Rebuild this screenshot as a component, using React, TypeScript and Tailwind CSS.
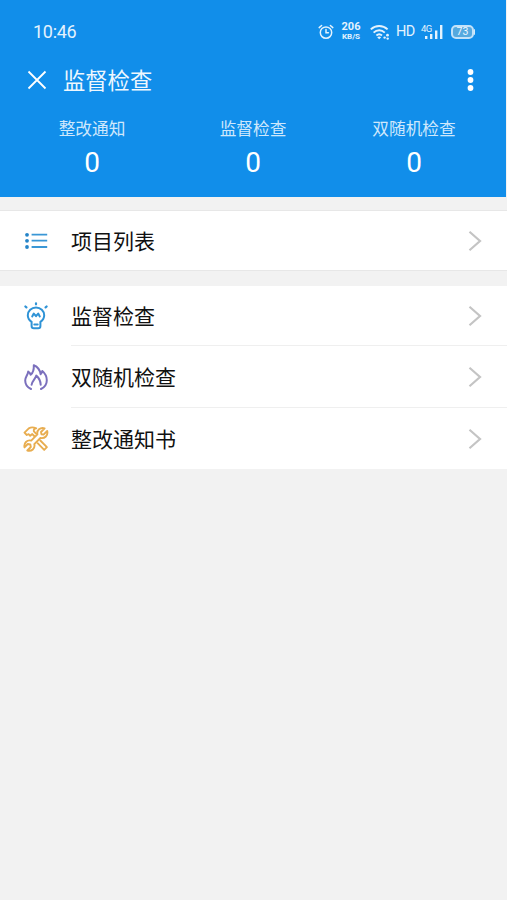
import React from 'react';

interface StatProps {
  label: string;
  value: number;
}

interface MenuRowProps {
  icon: React.ReactNode;
  title: string;
  divider?: boolean;
  className: string;
}

const stats: StatProps[] = [
  { label: '整改通知', value: 0 },
  { label: '监督检查', value: 0 },
  { label: '双随机检查', value: 0 },
];

const AlarmIcon = () => (
  <svg width="16" height="16" viewBox="0 0 16 16" fill="none" stroke="currentColor" strokeWidth="1.5" strokeLinecap="round">
    <circle cx="8" cy="8.6" r="5.7" />
    <path d="M8 5.6v3.2h2.4M1.2 3.6 3.6 1.5M14.8 3.6l-2.4-2.1" />
  </svg>
);

const WifiIcon = () => (
  <svg width="20" height="16" viewBox="0 0 20 16" fill="none" stroke="currentColor" strokeWidth="1.9">
    <path d="M.8 5.4c4.800-4.600 12-4.600 16.800 0M3.600 8.600c3.200-3.100 8-3.100 11.200 0M6.400 11.500c1.700-1.500 3.900-1.500 5.600 0" />
    <path d="m7.200 13.200 2 2.100 2-2.100c-1.200-.9-2.800-.9-4 0z" fill="currentColor" stroke="none" />
    <g fill="currentColor" stroke="none">
      <circle cx="14.600" cy="13.600" r="1.200" />
      <circle cx="17.500" cy="11.200" r="1.400" />
      <circle cx="17.700" cy="14.600" r="1.200" />
    </g>
  </svg>
);

const SignalIcon = () => (
  <svg width="22" height="16" viewBox="0 0 22 16" fill="currentColor">
    <rect x="3" y="12" width="2.4" height="3" />
    <rect x="8" y="10" width="2.4" height="5" />
    <rect x="13" y="6.5" width="2.4" height="8.5" />
    <rect x="18" y="1" width="2.4" height="14" />
  </svg>
);

const ListIcon = () => (
  <svg width="24" height="18" viewBox="0 0 24 18" fill="none" stroke="#3a97d6" strokeWidth="1.8">
    <path d="M7.6 2.6h15.6M7.6 8.7h15.6M7.6 15h15.6" />
    <g fill="#2484c8" stroke="none">
      <circle cx="3" cy="2.8" r="1.9" />
      <circle cx="3" cy="8.8" r="1.9" />
      <circle cx="3" cy="15" r="1.9" />
    </g>
  </svg>
);

const BulbIcon = () => (
  <svg width="24" height="28" viewBox="0 0 24 28" fill="none" stroke="#2f93d6" strokeWidth="2" strokeLinecap="round" strokeLinejoin="round">
    <path d="M7.6 19.8C5.2 18.2 3.800 15.900 3.800 13.200 3.800 8.800 7.400 5.400 12 5.400s8.200 3.400 8.200 7.800c0 2.700-1.400 5-3.800 6.600v4.200c0 1.400-.8 2.200-2.200 2.200H9.800c-1.400 0-2.200-.8-2.200-2.200z" />
    <path d="m8.200 14.400 1.600-2.800 2.200 2.600 2.200-2.600 1.600 2.800M10.300 22.600h3.400" />
    <path d="M12 1.300v1M1.400 4.500l1 .9M22.600 4.500l-1 .9" strokeWidth="2.2" />
  </svg>
);

const FlameIcon = () => (
  <svg width="24" height="28" viewBox="0 0 24 28" fill="none" stroke="#7b70bd" strokeWidth="2" strokeLinecap="round" strokeLinejoin="round">
    <path d="M7 26C3.500 24.300 1.200 21.200 1.200 17.400c0-3.400 2.600-5.400 3-8.800 1.300.7 2 1.700 2.400 3.200C9.500 9.400 10 6 9.800 2.200c4.200 1.700 6.200 4.800 6.800 9 1-.8 1.500-1.800 1.700-3.200 2.800 2.400 4.500 5.600 4.500 9.200 0 3.900-2.200 7-5.800 8.800" />
    <path d="M7.600 21.800c.3-4 3.600-5.300 4.700-9.200 2.700 2.200 4.200 5.200 4.400 9.200" />
  </svg>
);

const ToolsIcon = () => (
  <svg width="26" height="26" viewBox="0 0 26 26" fill="none" stroke="#e8ad50" strokeWidth="1.9" strokeLinecap="round" strokeLinejoin="round">
    {/* hammer */}
    <path d="M11.200 10 9.300 8.100 7.200 9.800 5.600 8.200 3.800 9 1.500 6.600 5.800 2.400c2.200-1.400 5-1.200 7.400 0-2 .4-2.700 1.300-2.300 3l2.200 2.300" />
    <path d="m17.300 14.500 6.600 6.700-2.700 2.700-6.600-6.700" />
    {/* wrench */}
    <path d="M21.600 2.300 18 6l.4 2.200 2.200.4 3.600-3.700c1.100 4.500-2.400 8-6.800 7.100l-6.100 6.100c1.200 4.400-2.800 7.700-7 6.400l3.500-3.500-.5-2.500-2.500-.5L1.500 21.400c-.9-4.400 2.500-7.800 6.700-6.800l6.200-6.200c-.9-4.200 2.900-7.400 7.200-6.100z" />
  </svg>
);

const Stat: React.FC<StatProps> = ({ label, value }) => (
  <div className="flex w-[161px] flex-col items-center">
    <span className="text-[16.7px] leading-6 text-[#cfe8fc]">{label}</span>
    <span className="mt-[7px] font-[Roboto] text-[28px] leading-8">{value}</span>
  </div>
);

const MenuRow: React.FC<MenuRowProps> = ({ icon, title, divider, className }) => (
  <div className={`flex items-center bg-white ${className}`}>
    <div className="flex w-[71px] shrink-0 items-center justify-center">{icon}</div>
    <div className={`flex h-full flex-1 items-center justify-between pr-[25px] ${divider ? 'border-b border-[#efefef]' : ''}`}>
      <span className="pb-px text-[21px] leading-7 text-[#111]">{title}</span>
      <svg width="14" height="22" viewBox="0 0 14 22" fill="none" stroke="#c4c4c4" strokeWidth="2.2">
        <path d="m1.500 1.700 10.500 9.300-10.500 9.300" />
      </svg>
    </div>
  </div>
);

const StatusBar = () => (
  <div className="flex h-[62px] items-center justify-between pl-[33px] pr-[31px] pt-px text-[#e4f2fd]">
    <span className="pt-px font-[Roboto] text-[18px] leading-6 tracking-[-0.3px]">10:46</span>
    <div className="flex items-center font-[Roboto]">
      <AlarmIcon />
      <div className="ml-1.5 flex w-[22px] flex-col items-center font-bold">
        <span className="text-[11px] leading-[10px]">206</span>
        <span className="text-[8px] leading-[9px]">KB/S</span>
      </div>
      <div className="ml-2">
        <WifiIcon />
      </div>
      <span className="ml-1.5 w-[19px] pt-px text-[14.5px] leading-5 tracking-[-0.6px]">HD</span>
      <div className="relative ml-[7px]">
        <SignalIcon />
        <span className="absolute -left-px top-0 text-[9.5px] leading-[9px] tracking-[-0.5px]">4G</span>
      </div>
      <div className="ml-[7px] flex items-center">
        <div className="flex h-[14px] w-[23px] items-center justify-center rounded-[5px] border-2 border-[#c3e2f9] bg-[#55a9df]">
          <span className="pt-px text-[10.5px] leading-[12px] text-[#f0f8ff]">73</span>
        </div>
        <div className="h-1.5 w-px rounded-r bg-[#d3eafb]" />
      </div>
    </div>
  </div>
);

export default function App() {
  return (
    <div className="h-[900px] w-[507px] overflow-hidden bg-[#f2f2f2] font-['Noto_Sans_CJK_SC',sans-serif]">
      <header className="mr-px h-[197px] bg-[#118eea] text-white">
        <StatusBar />
        <div className="flex h-9 items-center pl-[27px] pr-8">
          <svg width="20" height="20" viewBox="0 0 20 20" fill="none" stroke="currentColor" strokeWidth="1.8">
            <path d="m1.500 1.500 17 17M18.500 1.500l-17 17" />
          </svg>
          <h1 className="ml-4 pb-0.5 text-[22.3px] leading-8 text-[#eef7fe]">监督检查</h1>
          <svg className="ml-auto" width="7" height="24" viewBox="0 0 7 24" fill="currentColor">
            <circle cx="3.5" cy="4" r="2.9" />
            <circle cx="3.5" cy="12" r="2.9" />
            <circle cx="3.5" cy="20" r="2.9" />
          </svg>
        </div>
        <div className="flex justify-center pt-[18px]">
          {stats.map((stat) => (
            <Stat key={stat.label} {...stat} />
          ))}
        </div>
      </header>

      <section className="mt-[13px] border-y border-[#e7e7e7]">
        <MenuRow icon={<ListIcon />} title="项目列表" className="h-[59px]" />
      </section>

      <section className="mt-[15px]">
        <MenuRow icon={<BulbIcon />} title="监督检查" className="h-[60px]" divider />
        <MenuRow icon={<FlameIcon />} title="双随机检查" className="h-[62px]" divider />
        <MenuRow icon={<ToolsIcon />} title="整改通知书" className="h-[61px]" />
      </section>
    </div>
  );
}
